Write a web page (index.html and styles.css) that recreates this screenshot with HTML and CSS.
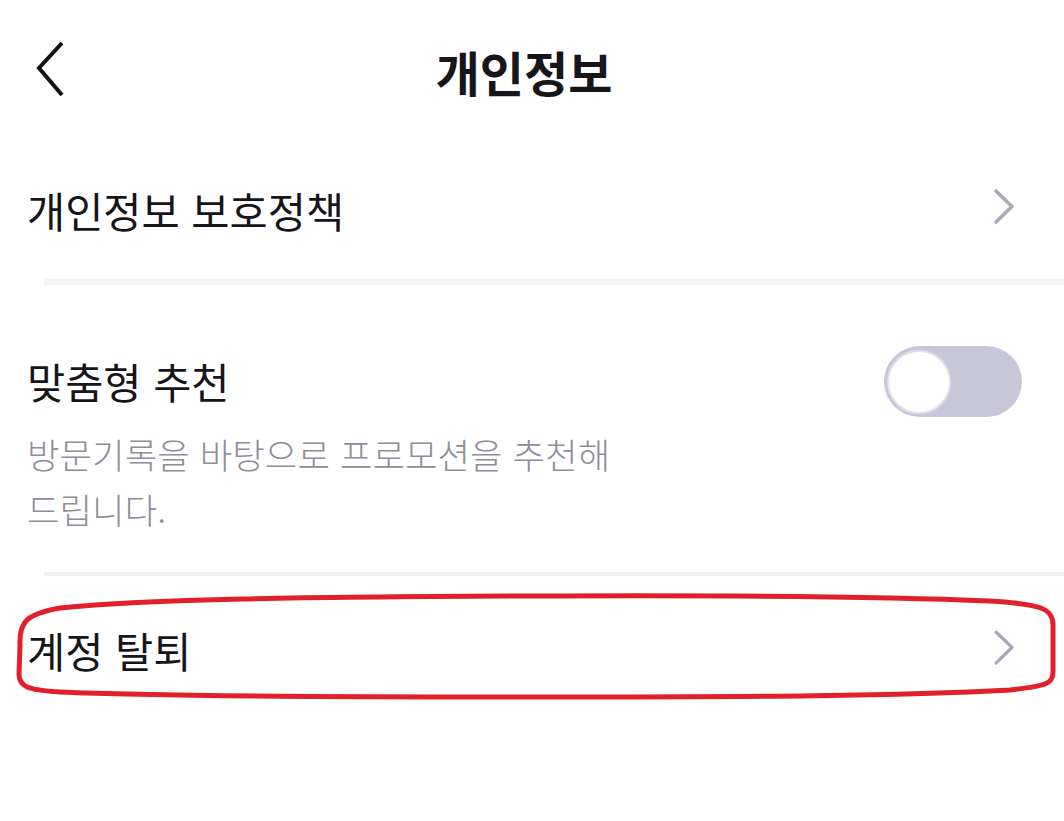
FILE: index.html
```html
<!DOCTYPE html>
<html lang="ko">
<head>
<meta charset="utf-8">
<title>개인정보</title>
<link rel="stylesheet" href="styles.css">
</head>
<body>
<div class="page">
  <header class="header">
    <button class="back" aria-label="뒤로">
      <svg width="40" height="60" viewBox="0 0 40 60"><polyline points="34,3 11,28 34,55" fill="none" stroke="#111" stroke-width="4"/></svg>
    </button>
    <h1 class="title">개인정보</h1>
    <div class="spacer"></div>
  </header>

  <div class="row row-policy">
    <span class="label">개인정보 보호정책</span>
    <svg class="chev" width="24" height="40" viewBox="0 0 24 40"><polyline points="4,4 20,19.5 4,35" fill="none" stroke="#a9a8b6" stroke-width="3.6" stroke-linecap="round" stroke-linejoin="round"/></svg>
  </div>
  <div class="divider thick"></div>

  <div class="row-reco">
    <div class="reco-top">
      <span class="label">맞춤형 추천</span>
      <div class="toggle"><div class="thumb"></div></div>
    </div>
    <p class="desc">방문기록을 바탕으로 프로모션을 추천해 드립니다.</p>
  </div>
  <div class="divider thin"></div>

  <div class="row row-leave">
    <span class="label">계정 탈퇴</span>
    <svg class="chev" width="24" height="40" viewBox="0 0 24 40"><polyline points="4,4 20,19.5 4,35" fill="none" stroke="#a9a8b6" stroke-width="3.2" stroke-linecap="round" stroke-linejoin="round"/></svg>
  </div>

  <svg class="annotation" width="1064" height="821" viewBox="0 0 1064 821">
    <path d="M20 645 C19 622 26 614 60 608 C150 599 300 597 530 596 C760 595 900 597 990 601 C1040 604 1053 608 1053 625 L1053 672 C1053 684 1046 686 1010 690 C900 696 760 697 530 697 C300 697 150 696 60 692 C26 690 19 686 19 674 Z" fill="none" stroke="#e2202b" stroke-width="5"/>
  </svg>
</div>
</body>
</html>
```

FILE: styles.css
```css
html, body {
  margin: 0;
  padding: 0;
  background: #ffffff;
}

body {
  font-family: "Noto Sans CJK KR", "Noto Sans", sans-serif;
  color: #16161a;
}

.page {
  position: relative;
  width: 1064px;
  height: 821px;
  overflow: hidden;
}

.header {
  height: 142px;
  display: flex;
  align-items: center;
}

.back {
  width: 120px;
  height: 142px;
  padding: 0 0 0 28px;
  margin: 0;
  border: 0;
  background: none;
  display: flex;
  align-items: center;
  justify-content: flex-start;
}

.back svg {
  display: block;
  margin-top: -2px;
}

.title {
  flex: 1;
  margin: 0;
  text-align: center;
  font-size: 48px;
  font-weight: 700;
  letter-spacing: 0;
  color: #16161a;
}

.spacer {
  width: 136px;
}

.row {
  display: flex;
  align-items: center;
  justify-content: space-between;
  padding: 0 48px 0 27px;
}

.row-policy {
  height: 137px;
}

.row-leave {
  height: 150px;
}

.label {
  font-size: 41.5px;
  font-weight: 400;
  color: #16161a;
  line-height: 1.2;
}

.chev {
  display: block;
  margin-top: -7px;
}

.divider {
  margin-left: 44px;
}

.divider.thick {
  height: 6px;
  background: #f4f4f8;
}

.divider.thin {
  height: 4px;
  background: #f2f2f4;
}

.row-reco {
  padding: 61px 42px 36px 27px;
}

.reco-top {
  display: flex;
  align-items: center;
  justify-content: space-between;
}

.toggle {
  width: 138px;
  height: 71px;
  border-radius: 36px;
  background: #c8c7d9;
  display: flex;
  align-items: center;
  padding-left: 3px;
  box-sizing: border-box;
}

.thumb {
  width: 64px;
  height: 64px;
  border-radius: 50%;
  background: #ffffff;
  box-sizing: border-box;
  border: 2px solid #e2e1ea;
}

.desc {
  margin: 9px 0 0 0;
  max-width: 640px;
  font-size: 35.4px;
  line-height: 55px;
  font-weight: 300;
  color: #8e8d98;
  word-break: keep-all;
}

.annotation {
  position: absolute;
  left: 0;
  top: 0;
  pointer-events: none;
}
```
